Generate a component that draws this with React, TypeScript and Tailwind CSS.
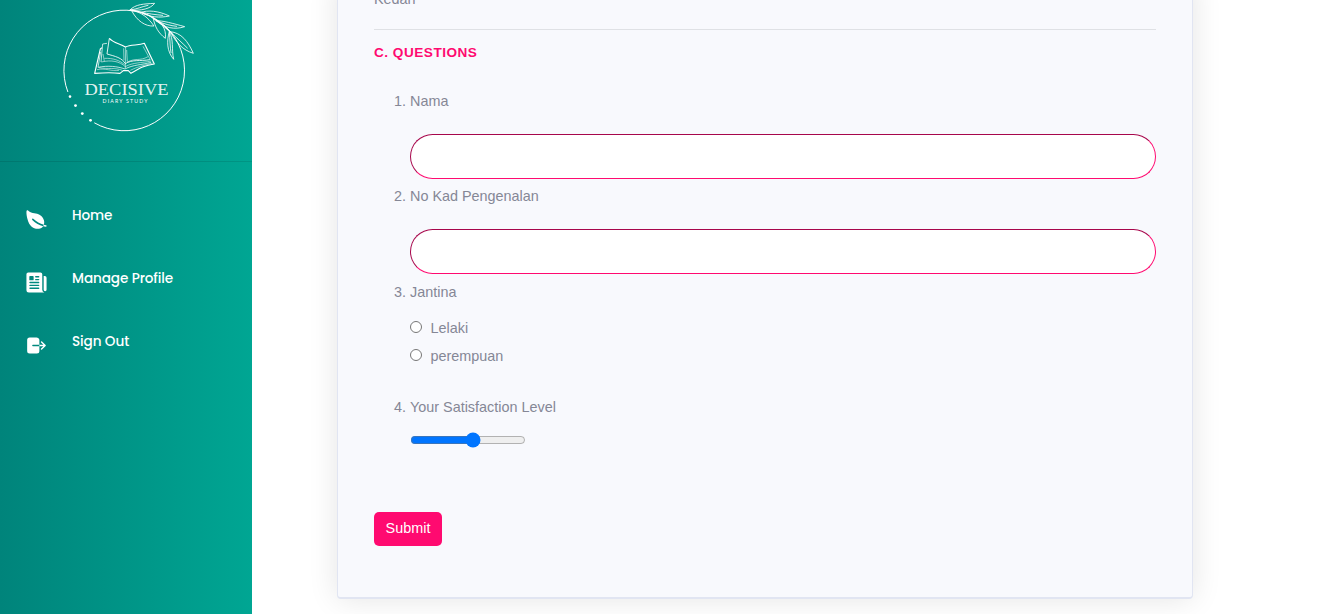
import type { ReactNode } from "react";
import { IoLeaf, IoLogOut, IoNewspaper } from "react-icons/io5";

function Logo() {
  return (
    <svg width="160" height="140" viewBox="50 0 160 140" fill="none" stroke="#fff" className="block">
      <path d="M67.9 92 A60.3 60.3 0 1 1 94.3 122.8" strokeWidth="1" />
      <g fill="#fff" stroke="none">
        <circle cx="70" cy="96.6" r="1.3" />
        <circle cx="75.5" cy="105.6" r="1.4" />
        <circle cx="82.3" cy="113.6" r="1.4" />
        <circle cx="90.5" cy="120.3" r="1.4" />
      </g>
      <g transform="translate(120 0) scale(.3333)" strokeWidth="2.5" strokeLinejoin="round" strokeLinecap="round">
        <path d="M30 30 C46 12 72 12 104 10 C92 26 64 33 30 30 C52 27 66 20 84 16" />
        <path d="M35 32 C62 34 86 54 102 78 C76 80 50 62 35 32" />
        <path d="M62 37 C84 30 114 32 148 48 C120 54 88 52 62 37 C86 41 104 44 128 46" />
        <path d="M100 55 C122 66 140 84 136 115 C116 100 104 80 100 55" />
        <path d="M108 62 C130 62 158 70 194 80 C164 90 134 84 108 62 C134 72 150 77 170 79" />
        <path d="M148 95 C162 118 154 148 161 178 C140 154 140 122 148 95 C150 120 150 140 153 158" />
        <path d="M151 95 C184 98 204 124 220 160 C188 150 168 128 151 95 C172 116 188 130 202 144" />
        <path d="M30 30 Q72 34 100 55 Q130 75 150 95" strokeWidth="3.5" />
      </g>
      <g transform="translate(80 30) scale(.3333)" strokeWidth="2.6" strokeLinejoin="round">
        <path d="M88 25 C101 40 121 40 136 51 C153 43 175 47 193 40 L223 102 C192 106 177 116 153 130 L145 122 L130 122 L120 130 C96 127 71 128 44 130 L61 57 L66 53" strokeWidth="3.4" />
        <path d="M88 25 L81 72 C105 79 126 83 136 101 C156 88 179 94 210 89" />
        <path d="M81 40 L68 42 L63 96 M62 66 L54 112 C84 106 112 109 135 117 C159 104 185 105 213 97" strokeWidth="2.2" />
        <path d="M64 96 C94 89 119 94 136 110 C158 97 185 99 214 93 M57 113 C85 118 105 112 127 121 M73 85 C99 84 119 91 134 104 M141 97 C165 83 180 94 204 80 M137 51 L136 115 M140 60 L142 95 M131 55 L132 91" strokeWidth="1.7" />
        <path d="M51 119 C77 113 94 125 117 121 M151 121 C174 109 194 106 218 99 M69 72 L73 94 M189 49 L211 89" strokeWidth="1.6" />
      </g>
      <g fill="#fff" stroke="none">
        <text x="84.5" y="95.2" fontFamily="Liberation Serif, serif" fontSize="17.5" fillOpacity=".9" textLength="84" lengthAdjust="spacingAndGlyphs">DECISIVE</text>
        <text x="102.5" y="102.8" fontFamily="Lato, sans-serif" fontSize="5.2" textLength="45" lengthAdjust="spacing">DIARY STUDY</text>
      </g>
    </svg>
  );
}

function NavItem({ icon, children }: { icon: ReactNode; children: ReactNode }) {
  return (
    <a href="#" className="flex h-[63px] items-start pl-[25px] text-white">
      <span className="mt-[16px] w-[47px] text-[23px]">{icon}</span>
      <span className="mt-3 font-['Poppins','Inter',sans-serif] text-[13.6px] leading-6 font-medium tracking-[-0.1px] whitespace-nowrap">
        {children}
      </span>
    </a>
  );
}

const inputClass =
  "block h-[45px] w-full rounded-full border border-t-[#a7064b] border-r-[#ff0a70] border-b-[#ff0a70] border-l-[#a7064b] bg-white px-5 outline-none";

function Question({ number, title, className, children }: { number: number; title: string; className: string; children: ReactNode }) {
  return (
    <li className={className}>
      <div className="flex h-[22px]">
        <span className="w-4">{number}.</span>
        <span>{title}</span>
      </div>
      <div className="pl-4">{children}</div>
    </li>
  );
}

export default function App() {
  return (
    <div className="flex h-[614px] overflow-hidden bg-white font-['Liberation_Sans',Arial,sans-serif]">
      <aside className="w-[252px] shrink-0 bg-linear-to-r from-[#00847b] to-[#00a693]">
        <div className="h-[162px] border-b border-black/10 pl-[50px]">
          <Logo />
        </div>
        <nav className="pt-[30px]">
          <NavItem icon={<IoLeaf />}>Home</NavItem>
          <NavItem icon={<IoNewspaper />}>Manage Profile</NavItem>
          <NavItem icon={<IoLogOut />}>Sign Out</NavItem>
        </nav>
      </aside>
      <main className="flex-1 pl-[85px]">
        <section className="-mt-5 h-[619px] w-[856px] rounded border border-b-2 border-[#e1e5f2] bg-[#f8f9fd] px-9 pt-[7px] text-[14.4px] leading-[22px] text-[#858796] shadow-[0_0_30px_rgba(0,0,0,0.11)]">
          <p>Kedah</p>
          <hr className="mt-[19px] border-[#dfe1e5]" />
          <h2 className="mt-3 text-[13.6px] font-bold tracking-[0.5px] text-[#ff0a70]">C. QUESTIONS</h2>
          <form>
            <ol className="pt-[26px] pl-5">
              <Question number={1} title="Nama" className="h-[95px]">
                <input aria-label="Nama" className={`mt-[22px] ${inputClass}`} />
              </Question>
              <Question number={2} title="No Kad Pengenalan" className="h-24">
                <input aria-label="No Kad Pengenalan" className={`mt-[22px] ${inputClass}`} />
              </Question>
              <Question number={3} title="Jantina" className="h-[115px]">
                <div className="mt-[14px] flex flex-col gap-1.5">
                  <label className="flex h-[22px] items-center gap-[8.5px]">
                    <input type="radio" name="jantina" className="-mt-[2px] size-3" />
                    Lelaki
                  </label>
                  <label className="flex h-[22px] items-center gap-[8.5px]">
                    <input type="radio" name="jantina" className="-mt-[2px] size-3" />
                    perempuan
                  </label>
                </div>
              </Question>
              <Question number={4} title="Your Satisfaction Level" className="h-[116px]">
                <input type="range" defaultValue={55} aria-label="Your Satisfaction Level" className="mt-[14px] block h-4 w-[116px]" />
              </Question>
            </ol>
            <button type="button" className="block h-[34px] w-[68px] rounded-[5px] bg-[#ff0a70] pb-[2px] text-center text-[14.4px] text-white">
              Submit
            </button>
          </form>
        </section>
      </main>
    </div>
  );
}
